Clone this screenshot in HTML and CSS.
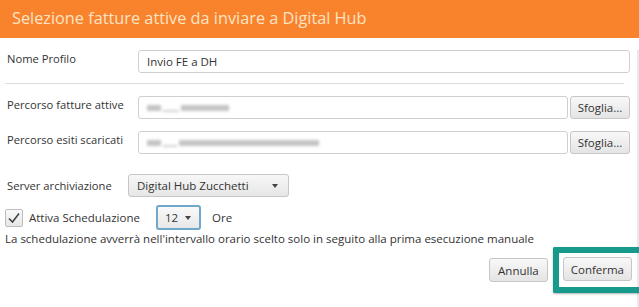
FILE: index.html
```html
<!DOCTYPE html>
<html lang="it">
<head>
    <meta charset="UTF-8">
    <title>Selezione fatture attive</title>
    <link rel="stylesheet" href="styles.css">
</head>
<body>
    <header class="titlebar">Selezione fatture attive da inviare a Digital Hub</header>

    <div class="dialog">
        <div class="row row-first">
            <label class="label">Nome Profilo</label>
            <div class="field field-full">Invio FE a DH</div>
        </div>

        <div class="separator"></div>

        <div class="row">
            <label class="label">Percorso fatture attive</label>
            <div class="field">
                <span class="blur b1"></span><span class="blur b2"></span><span class="blur b3"></span>
            </div>
            <button class="btn btn-browse">Sfoglia...</button>
        </div>

        <div class="row">
            <label class="label">Percorso esiti scaricati</label>
            <div class="field">
                <span class="blur b1"></span><span class="blur b4"></span><span class="blur b5"></span>
            </div>
            <button class="btn btn-browse">Sfoglia...</button>
        </div>

        <div class="row row-server">
            <label class="label label-short">Server archiviazione</label>
            <div class="combo combo-server">
                <span>Digital Hub Zucchetti</span>
                <span class="arrow"></span>
            </div>
        </div>

        <div class="row row-check">
            <span class="checkbox">
                <svg width="14" height="12" viewBox="0 0 14 12"><path d="M2 6.5 L5.5 10 L12 1.5" fill="none" stroke="#444" stroke-width="1.6"/></svg>
            </span>
            <span class="check-label">Attiva Schedulazione</span>
            <div class="combo combo-hours">
                <span>12</span>
                <span class="arrow"></span>
            </div>
            <span class="hours">Ore</span>
        </div>

        <p class="info">La schedulazione avverrà nell'intervallo orario scelto solo in seguito alla prima esecuzione manuale</p>

        <div class="actions">
            <button class="btn btn-action btn-cancel">Annulla</button>
            <div class="highlight">
                <button class="btn btn-action">Conferma</button>
            </div>
        </div>
    </div>
</body>
</html>
```

FILE: styles.css
```css
body {
    margin: 0;
    font-family: "Open Sans", Arial, sans-serif;
    font-size: 11.2px;
    color: #333;
    background-color: #fff;
    width: 639px;
    height: 307px;
    overflow: hidden;
}
.titlebar {
    height: 38px;
    line-height: 36px;
    padding-left: 12px;
    background-color: #f8832c;
    color: #fde3c6;
    font-size: 16.3px;
}
.dialog {
    padding: 0 7px 0 5px;
    border-right: 2px solid #e8e8e8;
    height: 269px;
}
.row {
    display: flex;
    align-items: flex-start;
    margin-top: 12px;
}
.label {
    width: 131px;
    padding-left: 2px;
    padding-top: 1px;
    flex-shrink: 0;
}
.label-short {
    width: 121px;
    padding-top: 4px;
}
.field {
    flex: 1;
    height: 21px;
    border: 1px solid #cfcfcf;
    border-radius: 3px;
    background-color: #fff;
    padding-left: 8px;
    line-height: 21px;
    display: flex;
    align-items: center;
    gap: 2px;
}
.field-full {
    display: block;
    font-size: 11.5px;
}
.blur {
    display: inline-block;
    height: 6px;
    background-color: #c4c4c4;
    filter: blur(1.5px);
}
.b1 { width: 14px; }
.b2 { width: 16px; height: 2px; margin-top: 6px; background-color: #d0d0d0; }
.b3 { width: 48px; }
.b4 { width: 14px; height: 2px; margin-top: 6px; background-color: #d0d0d0; }
.b5 { width: 140px; }
.separator {
    height: 1px;
    background-color: #dcdcdc;
    margin: 10px 6px 0 0;
}
.btn {
    font-family: "Open Sans", Arial, sans-serif;
    font-size: 11.5px;
    color: #333;
    border: 1px solid #c6c6c6;
    border-radius: 3px;
    background: linear-gradient(#f8f8f8, #e4e4e4);
    padding: 0;
}
.btn-browse {
    width: 60px;
    height: 23px;
    margin-left: 2px;
}
.row-server {
    margin-top: 20px;
}
.combo {
    height: 22px;
    border: 1px solid #c6c6c6;
    border-radius: 3px;
    background: linear-gradient(#f7f7f7, #e6e6e6);
    display: flex;
    align-items: center;
    justify-content: space-between;
    padding: 0 10px 0 8px;
    box-sizing: border-box;
    font-size: 11.5px;
}
.combo-server {
    width: 161px;
    height: 23px;
}
.arrow {
    width: 0;
    height: 0;
    border-left: 3.5px solid transparent;
    border-right: 3.5px solid transparent;
    border-top: 4px solid #444;
}
.row-check {
    margin-top: 8px;
    align-items: center;
}
.checkbox {
    width: 16px;
    height: 16px;
    border: 1px solid #bdbdbd;
    border-radius: 2px;
    background: linear-gradient(#fafafa, #e6e6e6);
    display: flex;
    align-items: center;
    justify-content: center;
}
.check-label {
    margin-left: 6px;
    width: 127px;
    font-size: 11.5px;
}
.combo-hours {
    width: 45px;
    height: 25px;
    border: 2px solid #6fa8c9;
    padding: 0 8px 0 7px;
    background: linear-gradient(#f9f9f9, #e8e8e8);
}
.hours {
    margin-left: 11px;
    font-size: 11.5px;
}
.info {
    margin: 1px 0 0 0;
    font-size: 11.5px;
}
.actions {
    display: flex;
    justify-content: flex-end;
    align-items: center;
    margin-top: 1px;
    margin-right: -9px;
}
.btn-action {
    height: 24px;
    padding: 0 7px;
}
.btn-cancel {
    padding: 0 8px;
}
.highlight {
    margin-left: 5px;
    padding: 4px 7px 6px 4px;
    border: 6px solid #17998b;
    border-right: none;
    border-radius: 2px 0 0 2px;
    box-shadow: 0 1px 2px rgba(0,0,0,0.3);
}
.highlight .btn-action {
    display: block;
}
```
